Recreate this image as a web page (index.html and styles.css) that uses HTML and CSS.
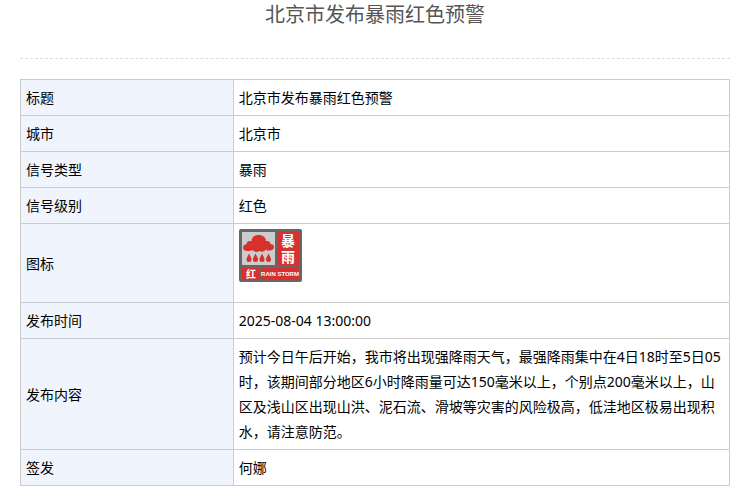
FILE: index.html
```
<!DOCTYPE html>
<html lang="zh-CN">
  <head>
    <meta charset="UTF-8" />
    <meta name="viewport" content="width=device-width, initial-scale=1.0" />
    <title>北京市发布暴雨红色预警</title>
    <link rel="stylesheet" href="styles.css">
  </head>
  <body>
    <div class="container">
      <h1 class="title">北京市发布暴雨红色预警</h1>

      <table class="warning">
        <tr>
          <th scope="row">标题</th>
          <td>北京市发布暴雨红色预警</td>
        </tr>
        <tr>
          <th scope="row">城市</th>
          <td>北京市</td>
        </tr>
        <tr>
          <th scope="row">信号类型</th>
          <td>暴雨</td>
        </tr>
        <tr>
          <th scope="row">信号级别</th>
          <td>红色</td>
        </tr>
        <tr>
          <th scope="row">图标</th>
          <td class="icon-cell">
            <svg class="icon" viewBox="0 0 64 54" role="img" aria-label="暴雨红色预警">
              <rect x="0" y="0" width="63" height="53" rx="2" fill="#666" />
              <rect x="3" y="3" width="33" height="33" fill="#ccc" />
              <rect x="38" y="3" width="22" height="33" fill="#d8302c" />
              <rect x="3" y="39" width="17" height="12" fill="#d8302c" />
              <rect x="22" y="39" width="38" height="12" fill="#d8302c" />
              <!-- 云 -->
              <path fill="#d8302c" d="M8 22C5.500 22 4 20.500 4 18.700C4 16.500 5.500 15.300 7.500 15.200C7.500 12.800 9.500 11.600 12.500 12.200C12.500 8 15.500 6 19.500 6C24 6 27.200 8.500 26.800 12.200C30 11.800 31.500 13 31.200 15C34 15 35.200 16.400 35 18.300C34.800 20.500 33 21.800 30 21.500C28.500 21.400 27.700 21 27 20.500C25 23 22.500 23.300 20.500 22C18 23.500 15.500 23.200 13.500 21C12 22 10 22.200 8 22Z" />
              <!-- 雨滴 -->
              <g fill="#d8302c">
                <path d="M10 24.500C11 27 12.500 28.500 12.500 30.500A2.500 2.500 0 0 1 7.500 30.500C7.500 28.500 9 27 10 24.500Z" />
                <path d="M16.500 24.500C17.500 27 19 28.500 19 30.500A2.500 2.500 0 0 1 14 30.500C14 28.500 15.500 27 16.500 24.500Z" />
                <path d="M23 24.500C24 27 25.500 28.500 25.500 30.500A2.500 2.500 0 0 1 20.500 30.500C20.500 28.500 22 27 23 24.500Z" />
                <path d="M29.500 24.500C30.500 27 32 28.500 32 30.500A2.500 2.500 0 0 1 27 30.500C27 28.500 28.500 27 29.500 24.500Z" />
              </g>
              <text class="icon-name" x="49" y="17">暴</text>
              <text class="icon-name" x="49" y="33">雨</text>
              <text class="icon-level" x="12" y="49">红</text>
              <text class="icon-en" x="41" y="47">RAIN STORM</text>
            </svg>
          </td>
        </tr>
        <tr>
          <th scope="row">发布时间</th>
          <td>2025-08-04 13:00:00</td>
        </tr>
        <tr>
          <th scope="row">发布内容</th>
          <td>预计今日午后开始，我市将出现强降雨天气，最强降雨集中在4日18时至5日05时，该期间部分地区6小时降雨量可达150毫米以上，个别点200毫米以上，山区及浅山区出现山洪、泥石流、滑坡等灾害的风险极高，低洼地区极易出现积水，请注意防范。</td>
        </tr>
        <tr>
          <th scope="row">签发</th>
          <td>何娜</td>
        </tr>
      </table>
    </div>
  </body>
</html>
```
FILE: styles.css
```
body {
  margin: 0;
  font-family: 'Noto Sans', 'Noto Sans CJK SC', sans-serif;
  font-size: 14px;
  line-height: 25px;
  color: #000;
  background-color: #fff;
}
.container {
  padding: 0 13px 15px 20px;
}
.title {
  margin: 0 0 20px;
  padding-bottom: 28px;
  border-bottom: 1px dashed #ddd;
  font-size: 20px;
  font-weight: normal;
  line-height: 30px;
  text-align: center;
  color: #555;
}
.warning {
  width: 100%;
  border-collapse: collapse;
}
.warning th,
.warning td {
  padding: 5px;
  border: 1px solid #ccc;
  text-align: left;
  vertical-align: middle;
}
.warning th {
  width: 30%;
  box-sizing: border-box;
  font-weight: normal;
  background-color: #f0f5fd;
}
.warning .icon-cell {
  padding-bottom: 19px;
}
.icon {
  display: block;
  width: 64px;
  height: 54px;
}
.icon text {
  fill: #fff;
  text-anchor: middle;
  font-weight: bold;
}
.icon-name {
  font-family: 'Noto Sans CJK SC', sans-serif;
  font-size: 14px;
}
.icon-level {
  font-family: 'Noto Sans CJK SC', sans-serif;
  font-size: 10px;
}
.icon-en {
  font-family: 'Liberation Sans Narrow', 'Liberation Sans', sans-serif;
  font-size: 6px;
}
```
